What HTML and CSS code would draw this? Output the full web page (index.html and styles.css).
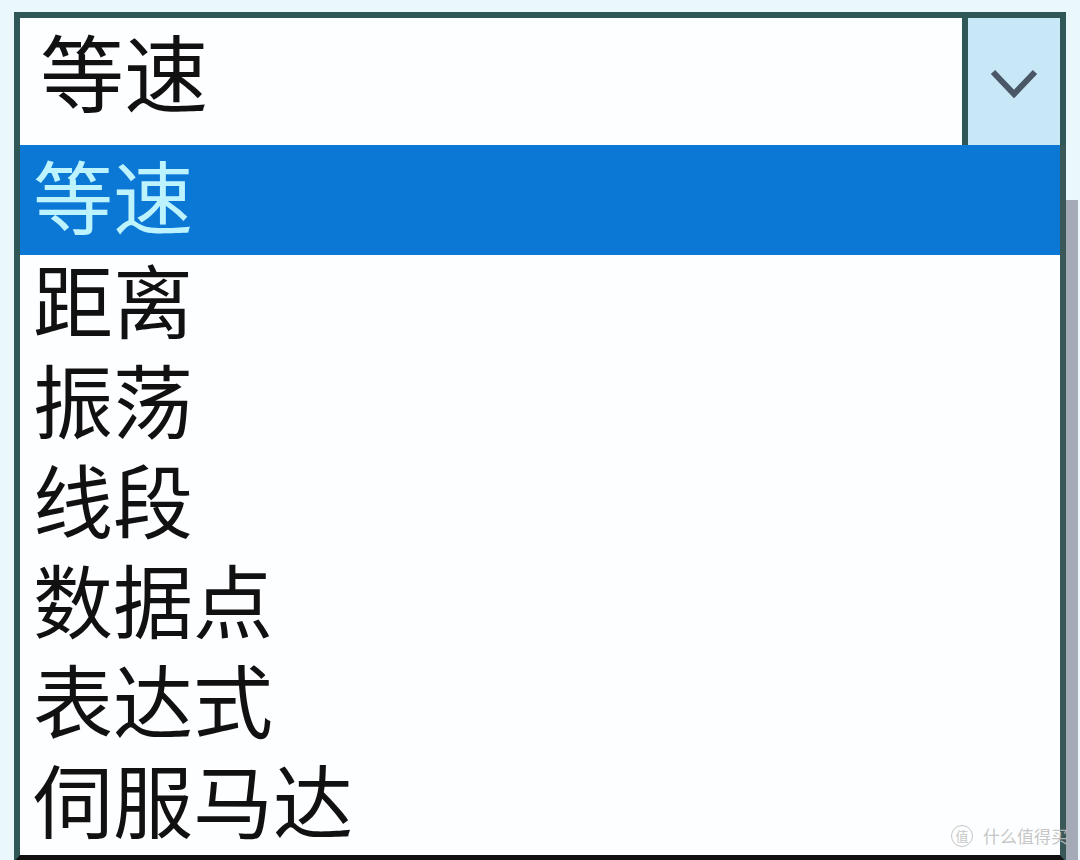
FILE: index.html
```html
<!DOCTYPE html>
<html lang="zh-CN">

<head>
    <meta charset="UTF-8">
    <title>运动模式</title>
    <link rel="stylesheet" href="styles.css">
</head>

<body>
    <div class="combo">
        <!-- 当前选中项 -->
        <div class="combo-field">
            <span class="field-text">等速</span>
            <span class="field-button">
                <svg width="60" height="40" viewBox="0 0 60 40">
                    <polyline points="9,14 30,36 51,14" fill="none" stroke="#4a5766" stroke-width="6" />
                </svg>
            </span>
        </div>
        <!-- 下拉列表 -->
        <ul class="combo-list">
            <li class="combo-item selected">等速</li>
            <li class="combo-item">距离</li>
            <li class="combo-item">振荡</li>
            <li class="combo-item">线段</li>
            <li class="combo-item">数据点</li>
            <li class="combo-item">表达式</li>
            <li class="combo-item">伺服马达</li>
        </ul>
    </div>

    <div class="mark"><span class="mark-logo">值</span>什么值得买</div>
</body>

</html>
```

FILE: styles.css
```css
body {
    margin: 0;
    width: 1080px;
    height: 860px;
    overflow: hidden;
    position: relative;
    background-color: #eaf7fb;
    font-family: "Noto Sans CJK SC", sans-serif;
}

.combo {
    width: 1052px;
    margin: 12px 0 0 14px;
}

/* 顶部输入框 */
.combo-field {
    display: flex;
    height: 133px;
    box-sizing: border-box;
    border: 6px solid #2f5757;
    border-bottom: none;
    background-color: #fdfeff;
}

.field-text {
    flex: 1;
    display: flex;
    align-items: center;
    padding: 0 0 24px 20px;
    font-size: 84px;
    line-height: 1;
    color: #111;
}

.field-button {
    width: 92px;
    display: flex;
    align-items: center;
    justify-content: center;
    padding-bottom: 8px;
    border-left: 6px solid #2f5757;
    background-color: #c8e8f8;
}

/* 列表 */
.combo-list {
    list-style: none;
    margin: 0;
    padding: 0;
    border-left: 6px solid #2f5757;
    border-right: 6px solid #3a5858;
    border-bottom: 7px solid #111;
    background-color: #fdfeff;
    box-shadow: 12px 55px 0 #a4abb6;
}

.combo-item {
    height: 100px;
    box-sizing: border-box;
    display: flex;
    align-items: center;
    padding: 0 0 16px 13px;
    font-size: 80px;
    line-height: 1;
    color: #111;
}

.combo-item.selected {
    height: 110px;
    padding-bottom: 14px;
    background-color: #0b78d6;
    color: #bdf3ff;
}

/* 右下角水印 */
.mark {
    position: absolute;
    right: 12px;
    bottom: 12px;
    display: flex;
    align-items: center;
    gap: 6px;
    font-size: 17px;
    color: rgba(190, 190, 190, 0.9);
}

.mark-logo {
    width: 20px;
    height: 20px;
    border: 1.5px solid rgba(190, 190, 190, 0.9);
    border-radius: 50%;
    font-size: 13px;
    display: flex;
    align-items: center;
    justify-content: center;
    margin-right: 4px;
}
```
